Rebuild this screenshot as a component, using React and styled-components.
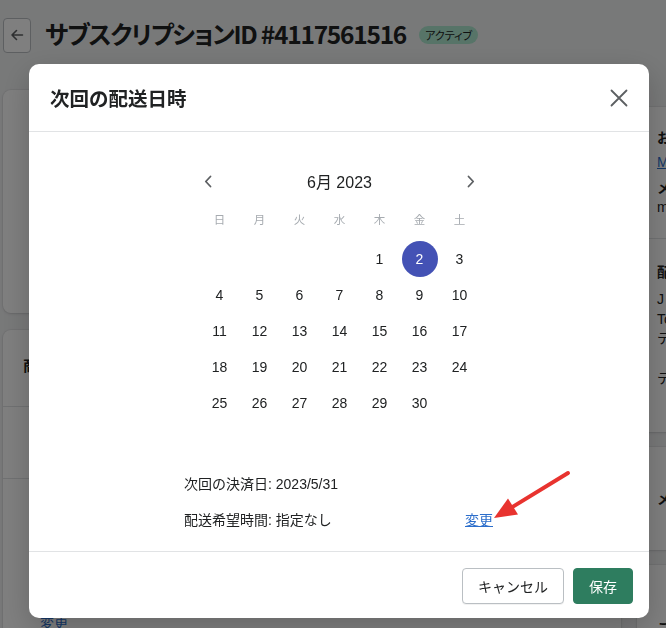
import React from 'react';
import styled, { createGlobalStyle } from 'styled-components';

const GlobalStyle = createGlobalStyle`
  html, body {
    margin: 0;
    padding: 0;
    background: #f1f2f3;
    overflow: hidden;
    font-family: 'Liberation Sans', 'Noto Sans CJK JP', sans-serif;
    color: #202223;
  }
  * { box-sizing: border-box; }
`;

const Page = styled.div`
  width: 666px;
  height: 628px;
  padding: 17px 0 0 3px;
  overflow: hidden;
`;

const Header = styled.div`
  display: flex;
  align-items: center;
  gap: 14px;
  height: 36px;
  margin-bottom: 37px;
`;

const BackButton = styled.div`
  width: 28px;
  height: 35px;
  border: 1px solid #babfc3;
  border-radius: 4px;
  background: #fff;
  display: flex;
  align-items: center;
  justify-content: center;
  color: #5c5f62;
`;

const Title = styled.h1`
  margin: 0;
  font-family: 'Noto Sans CJK JP', sans-serif;
  font-feature-settings: 'palt';
  font-size: 24.5px;
  line-height: 1;
  font-weight: 700;
  letter-spacing: -1.25px;
  white-space: nowrap;
  margin-top: -2px;
`;

const Badge = styled.span`
  font-family: 'Noto Sans CJK JP', sans-serif;
  font-feature-settings: 'palt';
  font-size: 11px;
  line-height: 18px;
  padding: 0 6px;
  border-radius: 9px;
  background: #aee9d1;
  color: #202223;
  margin-left: -1px;
`;

const Layout = styled.div`
  display: grid;
  grid-template-columns: 618px 300px;
  gap: 16px;
  align-items: start;
`;

const Column = styled.div`
  display: flex;
  flex-direction: column;
  gap: ${p => p.$gap || 17}px;
  padding-top: ${p => p.$top || 0}px;
`;

const Card = styled.div`
  background: #fff;
  border-radius: 8px;
  box-shadow: 0 0 0 1px rgba(63, 63, 68, 0.05), 0 1px 3px rgba(63, 63, 68, 0.15);
  height: ${p => (p.$h ? `${p.$h}px` : 'auto')};
  overflow: hidden;
`;

const Section = styled.div`
  padding: ${p => p.$pad || '20px'};
  border-top: ${p => (p.$divider ? '1px solid #e1e3e5' : 'none')};
  height: ${p => (p.$h ? `${p.$h}px` : 'auto')};
`;

const CardHeading = styled.h2`
  margin: 0;
  font-family: 'Noto Sans CJK JP', sans-serif;
  font-size: 15px;
  font-weight: 700;
  line-height: 20px;
`;

const Line = styled.div`
  font-size: 14px;
  line-height: ${p => p.$lh || 20}px;
  margin-top: ${p => p.$mt || 0}px;
  white-space: nowrap;
`;

const SubHeading = styled(Line)`
  font-weight: 700;
  font-family: 'Noto Sans CJK JP', sans-serif;
`;

const LinkText = styled.a`
  color: #2c6ecb;
  text-decoration: underline;
  font-size: 14px;
  line-height: 20px;
  white-space: nowrap;
`;

/* ---------- modal ---------- */

const Overlay = styled.div`
  position: fixed;
  inset: 0;
  background: rgba(0, 0, 0, 0.5);
  display: flex;
  padding: 64px 17px 10px 29px;
`;

const Modal = styled.div`
  position: relative;
  flex: 1;
  background: #fff;
  border-radius: 10px;
  display: flex;
  flex-direction: column;
  box-shadow: 0 10px 30px rgba(0, 0, 0, 0.2);
`;

const ModalHeader = styled.div`
  height: 68px;
  flex: none;
  display: flex;
  align-items: center;
  justify-content: space-between;
  padding: 0 20px 0 21px;
  border-bottom: 1px solid #e1e3e5;
`;

const ModalTitle = styled.h2`
  margin: 0;
  font-family: 'Noto Sans CJK JP', sans-serif;
  font-size: 19.5px;
  font-weight: 600;
`;

const CloseButton = styled.div`
  width: 20px;
  height: 20px;
  display: flex;
  align-items: center;
  justify-content: center;
  color: #5c5f62;
`;

const ModalBody = styled.div`
  flex: 1;
  display: flex;
  flex-direction: column;
  align-items: center;
  padding-top: 35px;
`;

const Calendar = styled.div`
  width: 280px;
  margin-left: 1px;
`;

const MonthNav = styled.div`
  display: flex;
  align-items: center;
  justify-content: space-between;
  height: 28px;
  margin-bottom: 10px;
`;

const NavArrow = styled.div`
  width: 16px;
  height: 28px;
  display: flex;
  align-items: center;
  justify-content: center;
  color: #5c5f62;
`;

const MonthLabel = styled.div`
  font-size: 16px;
  color: #202223;
`;

const Grid = styled.div`
  display: grid;
  grid-template-columns: repeat(7, 40px);
`;

const WeekDay = styled.div`
  height: 28px;
  margin-bottom: 8px;
  display: flex;
  align-items: center;
  justify-content: center;
  font-family: 'Noto Sans CJK JP', sans-serif;
  font-size: 11.5px;
  color: #a6abb0;
`;

const Day = styled.div`
  height: 36px;
  display: flex;
  align-items: center;
  justify-content: center;
  font-size: 14px;
  color: ${p => (p.$selected ? '#fff' : '#202223')};
  position: relative;
  z-index: 0;

  &::before {
    content: '';
    display: ${p => (p.$selected ? 'block' : 'none')};
    position: absolute;
    z-index: -1;
    width: 36px;
    height: 36px;
    border-radius: 50%;
    background: #4452b5;
  }
`;

const Info = styled.div`
  width: 310px;
  margin-top: 53px;
  display: flex;
  flex-direction: column;
  gap: 16px;
`;

const InfoRow = styled.div`
  display: flex;
  justify-content: space-between;
  align-items: center;
  font-size: 14px;
  line-height: 20px;
`;

const ChangeLink = styled.a`
  color: #2c6ecb;
  text-decoration: underline;
  font-size: 14px;
  margin-right: 1px;
`;

const ModalFooter = styled.div`
  flex: none;
  height: 67px;
  border-top: 1px solid #e1e3e5;
  display: flex;
  justify-content: flex-end;
  align-items: flex-start;
  gap: 9px;
  padding: 16px 16px 0 0;
`;

const Button = styled.button`
  height: 36px;
  padding: 0 15px;
  border-radius: 4px;
  font-family: 'Liberation Sans', 'Noto Sans CJK JP', sans-serif;
  font-size: 14px;
  border: 1px solid ${p => (p.$primary ? '#2e7d5f' : '#babfc3')};
  background: ${p => (p.$primary ? '#2e7d5f' : '#fff')};
  color: ${p => (p.$primary ? '#fff' : '#202223')};
  box-shadow: ${p => (p.$primary ? 'none' : '0 1px 0 rgba(0,0,0,0.05)')};
`;

const Annotation = styled.svg`
  position: absolute;
  left: 455px;
  top: 400px;
  overflow: visible;
`;

const weekDays = ['日', '月', '火', '水', '木', '金', '土'];
const days = [null, null, null, null, ...Array.from({ length: 30 }, (_, i) => i + 1)];

const Chevron = ({ dir }) => (
  <svg width="8" height="13" viewBox="0 0 8 13">
    <path
      d={dir === 'left' ? 'M6.5 1.5 L1.8 6.5 L6.5 11.5' : 'M1.5 1.5 L6.2 6.5 L1.5 11.5'}
      fill="none"
      stroke="currentColor"
      strokeWidth="1.8"
      strokeLinecap="round"
      strokeLinejoin="round"
    />
  </svg>
);

export default function App() {
  return (
    <>
      <GlobalStyle />
      <Page>
        <Header>
          <BackButton>
            <svg width="14" height="14" viewBox="0 0 14 14">
              <path d="M12.5 7 H2 M6.5 2.5 L2 7 L6.5 11.5" fill="none" stroke="currentColor" strokeWidth="1.6" strokeLinecap="round" strokeLinejoin="round" />
            </svg>
          </BackButton>
          <Title>サブスクリプションID #4117561516</Title>
          <Badge>アクティブ</Badge>
        </Header>

        <Layout>
          <Column>
            <Card $h={223} />
            <Card>
              <Section $pad="25px 20px 0" $h={76}>
                <CardHeading>商品の詳細</CardHeading>
              </Section>
              <Section $divider $h={72} />
              <Section $divider $pad="134px 37px 20px">
                <LinkText>変更</LinkText>
              </Section>
            </Card>
          </Column>

          <Column $top={17} $gap={15}>
            <Card $h={325}>
              <Section $h={131}>
                <SubHeading>お客様</SubHeading>
                <Line $mt={5}><LinkText>Mari Tanaka</LinkText></Line>
                <SubHeading $mt={5}>メールアドレス</SubHeading>
                <Line $lh={21}>mari@example.com</Line>
              </Section>
              <Section $divider $pad="22px 20px 20px">
                <SubHeading>配送先住所</SubHeading>
                <Line $mt={8}>J 日本</Line>
                <Line>Tokyo</Line>
                <Line $lh={19}>テスト区テスト町1-2-3</Line>
                <Line $mt={20}>テスト</Line>
              </Section>
            </Card>
            <Card $h={103}>
              <Section $pad="41px 20px 20px">
                <SubHeading>メモ</SubHeading>
              </Section>
            </Card>
            <Card $h={100}>
              <Section $pad="52px 20px 20px">
                <SubHeading>ご注文履歴</SubHeading>
              </Section>
            </Card>
          </Column>
        </Layout>
      </Page>

      <Overlay>
        <Modal>
          <ModalHeader>
            <ModalTitle>次回の配送日時</ModalTitle>
            <CloseButton>
              <svg width="18" height="18" viewBox="0 0 18 18">
                <path d="M1.5 1.5 L16.5 16.5 M16.5 1.5 L1.5 16.5" fill="none" stroke="currentColor" strokeWidth="1.8" strokeLinecap="round" />
              </svg>
            </CloseButton>
          </ModalHeader>

          <ModalBody>
            <Calendar>
              <MonthNav>
                <NavArrow><Chevron dir="left" /></NavArrow>
                <MonthLabel>6月 2023</MonthLabel>
                <NavArrow><Chevron dir="right" /></NavArrow>
              </MonthNav>
              <Grid>
                {weekDays.map(w => (
                  <WeekDay key={w}>{w}</WeekDay>
                ))}
                {days.map((d, i) => (
                  <Day key={i} $selected={d === 2}>{d}</Day>
                ))}
              </Grid>
            </Calendar>

            <Info>
              <InfoRow>
                <span>次回の決済日: 2023/5/31</span>
              </InfoRow>
              <InfoRow>
                <span>配送希望時間: 指定なし</span>
                <ChangeLink>変更</ChangeLink>
              </InfoRow>
            </Info>
          </ModalBody>

          <ModalFooter>
            <Button>キャンセル</Button>
            <Button $primary>保存</Button>
          </ModalFooter>

          <Annotation width="95" height="65" viewBox="0 0 95 65">
            <line x1="84" y1="9" x2="29" y2="42.6" stroke="#e8332f" strokeWidth="4" strokeLinecap="round" />
            <polygon points="10,54 34,50.5 24,34.5" fill="#e8332f" />
          </Annotation>
        </Modal>
      </Overlay>
    </>
  );
}
